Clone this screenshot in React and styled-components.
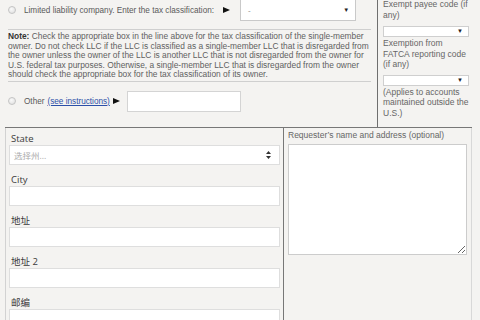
import React from "react";
import styled, { createGlobalStyle } from "styled-components";

const Global = createGlobalStyle`
  html, body { margin: 0; padding: 0; background: #f4f3f1; }
  body { width: 480px; height: 320px; overflow: hidden; }
  * { box-sizing: border-box; }
`;

const Page = styled.div`
  width: 480px;
  height: 320px;
  overflow: hidden;
  background: #f4f3f1;
  font-family: "Liberation Sans", Arial, sans-serif;
`;

const Top = styled.div`
  display: flex;
  height: 127px;
`;

const TopLeft = styled.div`
  width: 378px;
  border-right: 1px solid #6f6f6f;
  padding: 0 6px 0 8px;
  display: flex;
  flex-direction: column;
`;

const OptionRow = styled.div`
  display: flex;
  align-items: center;
  height: ${(p) => p.$h}px;
  margin-top: ${(p) => p.$mt || 0}px;
  font-size: 8.2px;
  color: #5a5a5a;
`;

const Radio = styled.span`
  width: 8px;
  height: 8px;
  border-radius: 50%;
  border: 1px solid #c4c4c4;
  background: radial-gradient(circle at 40% 35%, #fafafa, #dcdcdc);
  margin-right: 8px;
  flex: none;
`;

const Arrow = styled.svg`
  width: 7px;
  height: 6px;
  margin-left: ${(p) => p.$ml}px;
  flex: none;
`;

const Link = styled.a`
  color: #2b4fa8;
  text-decoration: underline;
  margin-left: 3px;
`;

const SelectBox = styled.div`
  margin-left: ${(p) => p.$ml}px;
  width: ${(p) => p.$w}px;
  height: ${(p) => p.$h}px;
  background: #fff;
  border: 1px solid #c9c9c9;
  display: flex;
  align-items: center;
  justify-content: space-between;
  padding: 0 6px 0 7px;
  font-size: 8px;
  color: #888;
  flex: none;
`;

const Caret = styled.span`
  font-size: 6px;
  color: #222;
`;

const TextBox = styled.div`
  margin-left: ${(p) => p.$ml}px;
  width: ${(p) => p.$w}px;
  height: ${(p) => p.$h}px;
  background: #fff;
  border: 1px solid #d4d4d4;
  flex: none;
`;

const Divider = styled.div`
  height: 1px;
  background: #cfcfcf;
  margin-top: ${(p) => p.$mt}px;
`;

const Note = styled.p`
  margin: 2px 0 0 0;
  font-size: 8.4px;
  line-height: 9.5px;
  color: #5f5f5f;
  white-space: nowrap;
  b { color: #333; }
`;

const TopRight = styled.div`
  flex: 1;
  padding: 0 5px;
  font-size: 8.5px;
  line-height: 10.5px;
  color: #666;
  display: flex;
  flex-direction: column;
`;

const RightText = styled.div`
  margin-top: ${(p) => p.$mt}px;
`;

const MiniSelect = styled.div`
  margin-top: ${(p) => p.$mt}px;
  height: 11px;
  width: 86px;
  background: #fff;
  border: 1px solid #cfcfcf;
  display: flex;
  align-items: center;
  justify-content: flex-end;
  padding-right: 5px;
`;

const Lower = styled.div`
  margin-left: 5px;
  width: 467px;
  height: 200px;
  border-top: 1px solid #777;
  display: grid;
  grid-template-columns: 279px 1fr;
`;

const LeftPanel = styled.div`
  border-left: 1px solid #d2d2d2;
  border-right: 1px solid #777;
  padding: 5px 3px 0 3px;
  display: flex;
  flex-direction: column;
`;

const Field = styled.div`
  display: flex;
  flex-direction: column;
  margin-bottom: 9px;
`;

const Label = styled.label`
  font-family: "Open Sans", "Noto Sans CJK SC", sans-serif;
  font-size: 9.5px;
  line-height: 12px;
  color: #3a3a3a;
  padding-left: 2px;
`;

const Input = styled.div`
  height: 20px;
  background: #fff;
  border: 1px solid #dedede;
  display: flex;
  align-items: center;
  justify-content: space-between;
  padding: 0 8px 0 4px;
  font-family: "Open Sans", "Noto Sans CJK SC", sans-serif;
  font-size: 8.5px;
  color: #aaa;
`;

const RightPanel = styled.div`
  border-right: 1px solid #d8d8d8;
  padding: 1px 4px 0 4px;
  display: flex;
  flex-direction: column;
`;

const ReqLabel = styled.div`
  font-size: 8.5px;
  line-height: 12px;
  color: #666;
`;

const Area = styled.textarea`
  margin-top: 3px;
  width: 179px;
  height: 111px;
  border: 1px solid #cccccc;
  background: #fff;
  resize: both;
  outline: none;
`;

const TriRight = ({ ml }) => (
  <Arrow $ml={ml} viewBox="0 0 7 6">
    <path d="M0 0 L7 3 L0 6 Z" fill="#111" />
  </Arrow>
);

const UpDown = () => (
  <svg width="5" height="8" viewBox="0 0 5 8">
    <path d="M2.5 0 L5 3 L0 3 Z M2.5 8 L5 5 L0 5 Z" fill="#333" />
  </svg>
);

export default function App() {
  return (
    <Page>
      <Global />
      <Top>
        <TopLeft>
          <OptionRow $h={20}>
            <Radio />
            <span>Limited liability company. Enter the tax classification:</span>
            <TriRight ml={9} />
            <SelectBox $ml={10} $w={116} $h={22}>
              <span>-</span>
              <Caret>▼</Caret>
            </SelectBox>
          </OptionRow>
          <Divider $mt={9} />
          <Note>
            <b>Note:</b> Check the appropriate box in the line above for the tax classification of the single-member
            <br />
            owner. Do not check LLC if the LLC is classified as a single-member LLC that is disregarded from
            <br />
            the owner unless the owner of the LLC is another LLC that is not disregarded from the owner for
            <br />
            U.S. federal tax purposes. Otherwise, a single-member LLC that is disregarded from the owner
            <br />
            should check the appropriate box for the tax classification of its owner.
          </Note>
          <Divider $mt={1} />
          <OptionRow $h={21} $mt={9}>
            <Radio />
            <span>Other</span>
            <Link>(see instructions)</Link>
            <TriRight ml={3} />
            <TextBox $ml={7} $w={114} $h={21} />
          </OptionRow>
        </TopLeft>
        <TopRight>
          <RightText $mt={-1}>
            Exempt payee code (if
            <br />
            any)
          </RightText>
          <MiniSelect $mt={6}>
            <Caret>▼</Caret>
          </MiniSelect>
          <RightText $mt={1}>
            Exemption from
            <br />
            FATCA reporting code
            <br />
            (if any)
          </RightText>
          <MiniSelect $mt={5}>
            <Caret>▼</Caret>
          </MiniSelect>
          <RightText $mt={1}>
            (Applies to accounts
            <br />
            maintained outside the
            <br />
            U.S.)
          </RightText>
        </TopRight>
      </Top>
      <Lower>
        <LeftPanel>
          <Field>
            <Label>State</Label>
            <Input>
              <span>选择州...</span>
              <UpDown />
            </Input>
          </Field>
          <Field>
            <Label>City</Label>
            <Input />
          </Field>
          <Field>
            <Label>地址</Label>
            <Input />
          </Field>
          <Field>
            <Label>地址 2</Label>
            <Input />
          </Field>
          <Field>
            <Label>邮编</Label>
            <Input />
          </Field>
        </LeftPanel>
        <RightPanel>
          <ReqLabel>Requester’s name and address (optional)</ReqLabel>
          <Area />
        </RightPanel>
      </Lower>
    </Page>
  );
}
